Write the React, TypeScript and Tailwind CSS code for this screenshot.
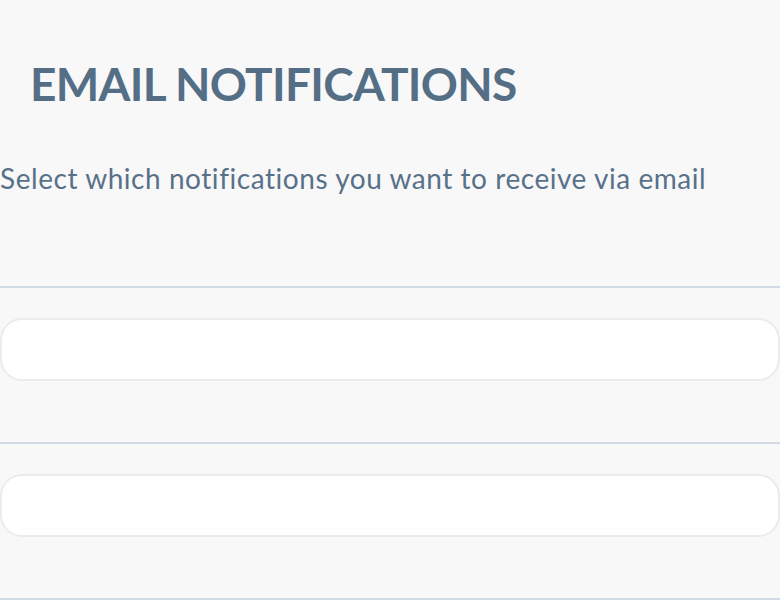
import React from 'react';

const sections = ['a', 'b', 'c'];

export default function App() {
  return (
    <div className="min-h-screen bg-[#f8f8f8] text-[#556f87]" style={{ fontFamily: 'Lato, "Noto Sans", sans-serif' }}>
      <div className="pt-[56px] pl-[30px]">
        <h1 className="text-[46px] font-bold leading-[56px] tracking-[-0.7px] text-[#546e86]">EMAIL NOTIFICATIONS</h1>
      </div>
      <p className="mt-[48px] text-[28px] leading-[36px] tracking-[0.55px] text-[#58718a]">
        Select which notifications you want to receive via email
      </p>
      <div className="mt-[90px]">
        {sections.map(s => (
          <div key={s} className="border-t-2 border-[#d2dce6] pt-[30px] pb-[61px]">
            <div className="h-[63px] rounded-[22px] border-2 border-[#e9ecef] bg-white"></div>
          </div>
        ))}
      </div>
    </div>
  );
}
